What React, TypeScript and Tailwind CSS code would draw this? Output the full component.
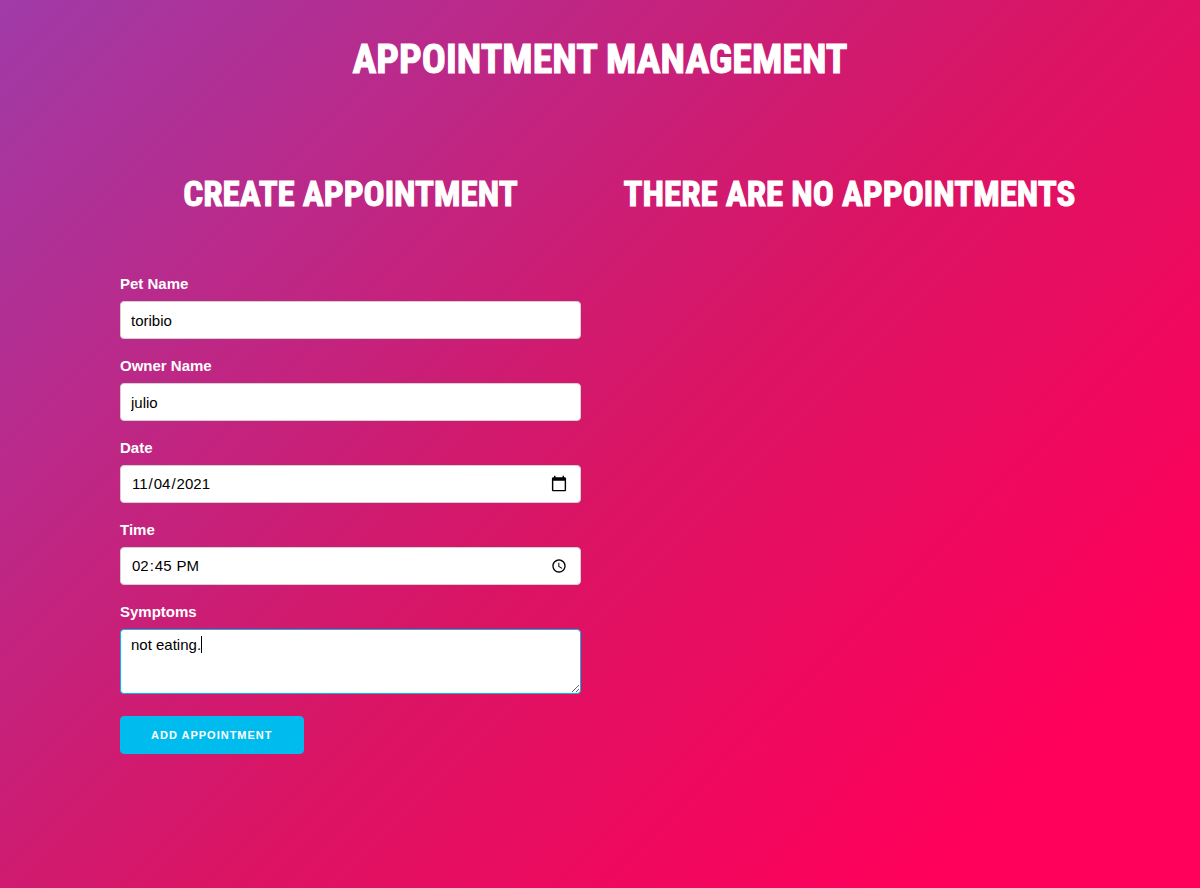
import { useEffect, useRef } from "react";

const fieldClass =
  "block w-full rounded border border-[#d1d1d1] bg-white px-2.5 py-1.5 text-[15px] text-black outline-none focus:border-[#00bbee]";
const labelClass = "mb-[5px] block text-[15px] leading-6 font-bold";
const headingClass =
  "text-center font-['Roboto_Condensed','Roboto',sans-serif] font-bold uppercase [-webkit-text-stroke:1px_white]";

type FieldProps = { id: string; label: string; type: string; value: string; extra?: string };

function Field({ id, label, type, value, extra = "" }: FieldProps) {
  return (
    <div className="mb-[15px]">
      <label htmlFor={id} className={labelClass}>{label}</label>
      <input id={id} name={id} type={type} defaultValue={value} className={`${fieldClass} h-[38px] ${extra}`} />
    </div>
  );
}

export default function App() {
  const symptoms = useRef<HTMLTextAreaElement>(null);

  useEffect(() => {
    const box = symptoms.current;
    if (box) {
      box.focus();
      box.setSelectionRange(box.value.length, box.value.length);
    }
  }, []);

  return (
    <div className="min-h-screen bg-[linear-gradient(135deg,#a03ba8_0%,#da1464_52%,#ff005a_87%)] font-['Liberation_Sans',Arial,sans-serif] text-white">
      <h1 className={`${headingClass} pt-[30px] text-[40px] leading-[60px]`}>Appointment Management</h1>
      <main className="mx-auto grid w-4/5 max-w-[960px] grid-cols-2 gap-x-[38px] pt-[75px] pb-10">
        <section>
          <h2 className={`${headingClass} mb-[47px] text-[35px] leading-[60px]`}>Create Appointment</h2>
          <form onSubmit={(event) => event.preventDefault()}>
            <Field id="pet" label="Pet Name" type="text" value="toribio" />
            <Field id="owner" label="Owner Name" type="text" value="julio" />
            <Field
              id="date"
              label="Date"
              type="date"
              value="2021-11-04"
              extra="[&::-webkit-calendar-picker-indicator]:h-[18px] [&::-webkit-calendar-picker-indicator]:w-[18px]"
            />
            <Field id="time" label="Time" type="time" value="14:45" />
            <label htmlFor="symptoms" className={labelClass}>Symptoms</label>
            <div className="relative mb-[22px]">
              <textarea
                id="symptoms"
                name="symptoms"
                ref={symptoms}
                defaultValue="not eating."
                className={`${fieldClass} h-[65px] resize leading-[18px] caret-transparent`}
              />
              <span aria-hidden="true" className="pointer-events-none absolute top-[7px] left-[81px] h-[17px] w-px bg-black" />
            </div>
            <button
              type="submit"
              className="h-[38px] rounded border border-[#00bbee] bg-[#00bbee] px-[30px] text-[11px] font-bold tracking-[1px] uppercase"
            >
              Add Appointment
            </button>
          </form>
        </section>
        <section>
          <h2 className={`${headingClass} text-[35px] leading-[60px]`}>There are no appointments</h2>
        </section>
      </main>
    </div>
  );
}
